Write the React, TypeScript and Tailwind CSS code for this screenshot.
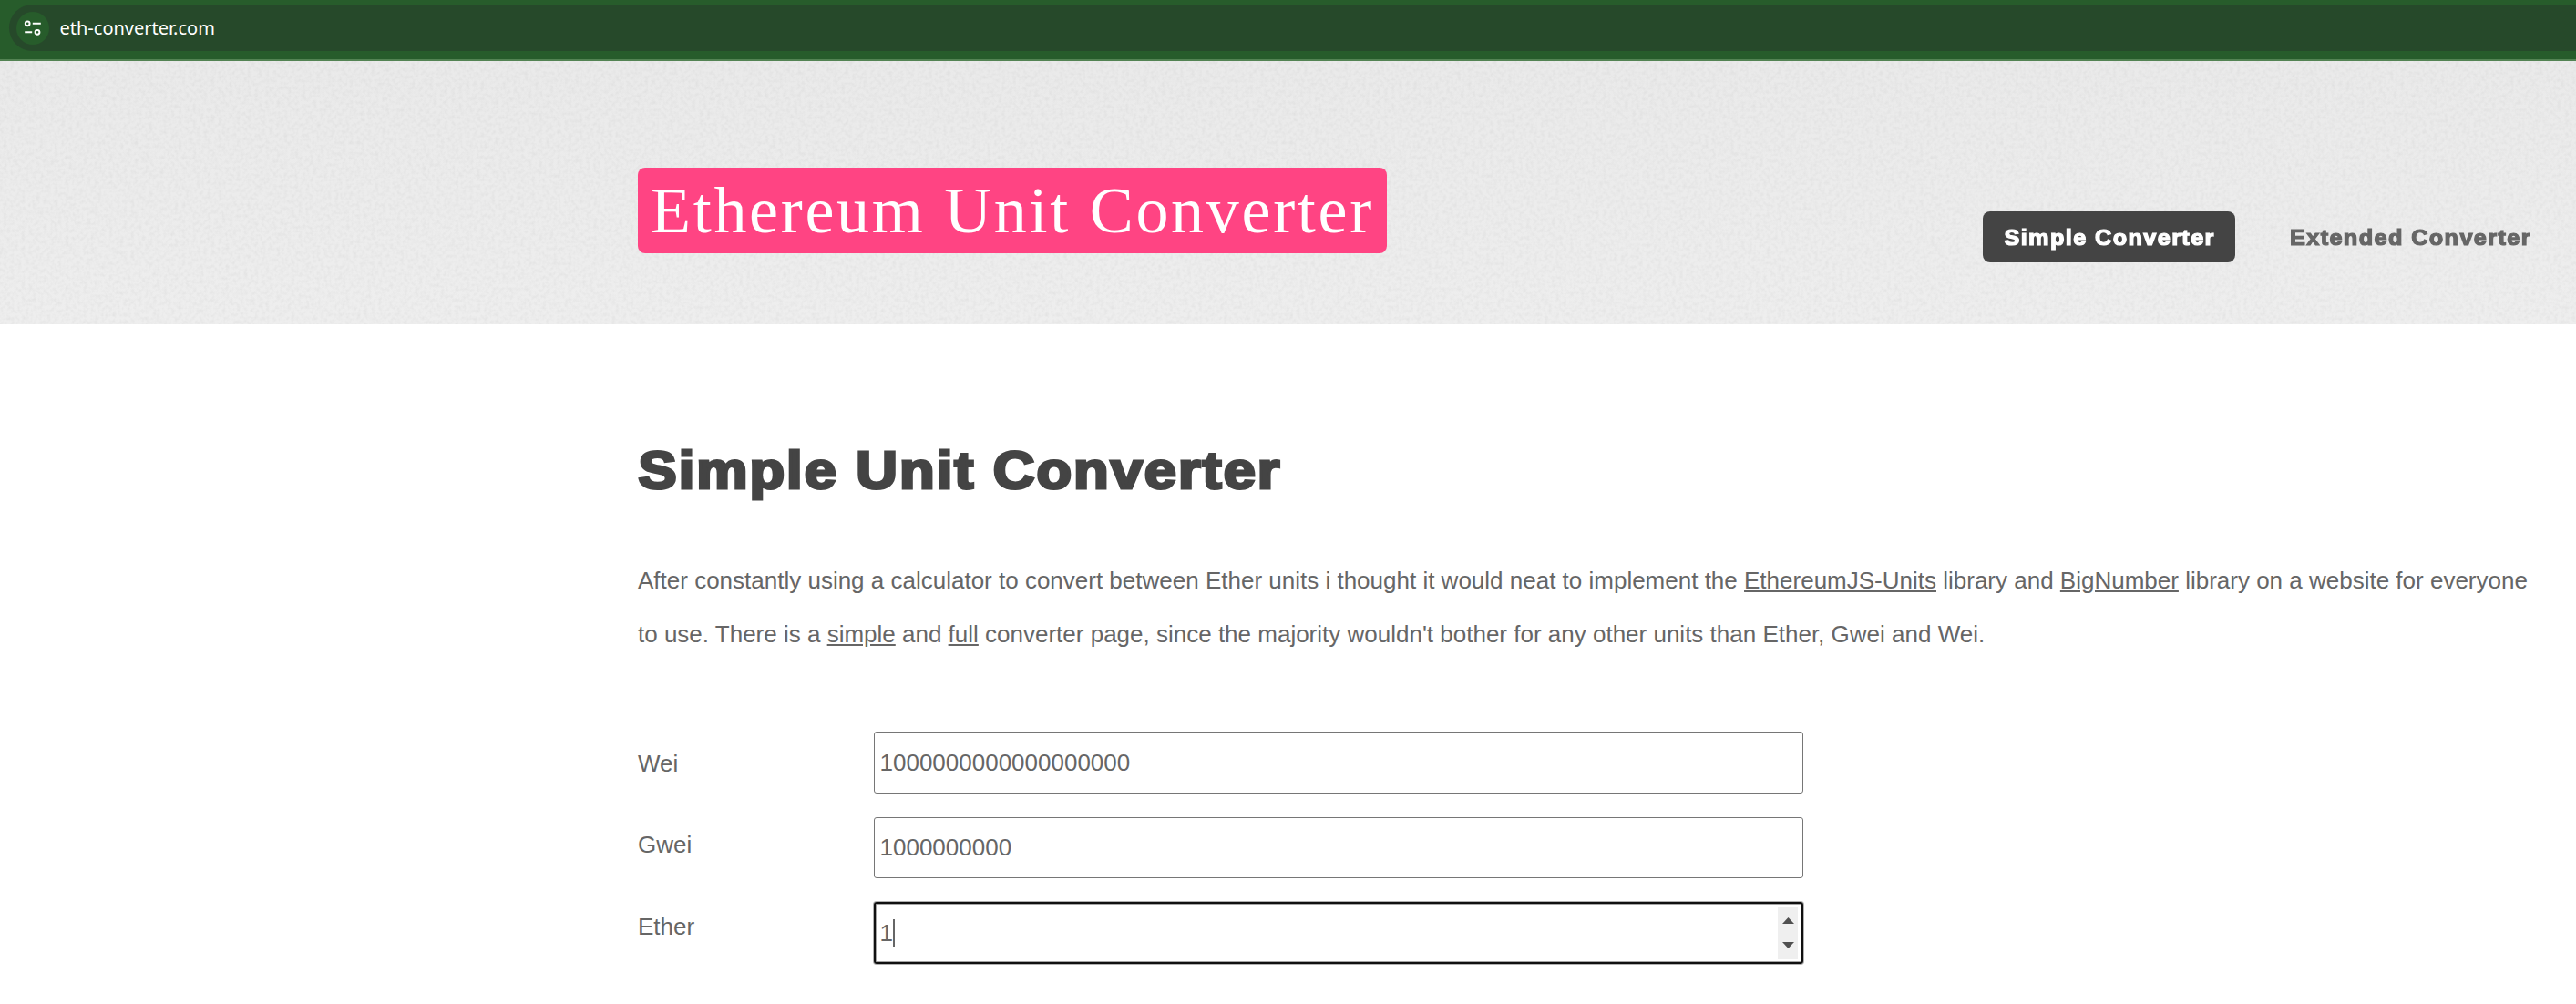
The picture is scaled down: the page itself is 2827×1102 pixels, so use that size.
function AddressBar() {
  return (
    <div className="h-[67px] bg-[#275c2b] border-b-2 border-[#538353] pt-[5px] pl-[10px]">
      <div className="flex h-[51px] items-center rounded-l-full bg-[#26492a] pl-2">
        <svg width="36" height="36" viewBox="0 0 36 36" fill="none" className="rounded-full bg-[#275c2b]">
          <g stroke="#fff" strokeWidth="2">
            <circle cx="12.2" cy="12.8" r="2.4" />
            <path d="M17.8 12.8H26.8" />
            <path d="M9.2 22.3H17.2" />
            <circle cx="23" cy="22.3" r="2.4" />
          </g>
        </svg>
        <span className="ml-[11.5px] font-['Noto_Sans',sans-serif] text-[20px] leading-7 text-white">eth-converter.com</span>
      </div>
    </div>
  );
}

/* Paper-like grain behind the site header */
function Grain() {
  return (
    <svg className="absolute inset-0 h-full w-full" aria-hidden="true">
      <filter id="grain" x="0" y="0" width="100%" height="100%" colorInterpolationFilters="sRGB">
        <feTurbulence type="fractalNoise" baseFrequency="0.25" numOctaves="2" seed="4" stitchTiles="stitch" />
        <feColorMatrix values="0 0 0 0 0  0 0 0 0 0  0 0 0 0 0  0.08 0 0 0 -0.031" />
      </filter>
      <rect width="100%" height="100%" filter="url(#grain)" />
    </svg>
  );
}

function Header() {
  return (
    <header className="relative h-[289px] bg-linear-to-b from-[#eaeaea] to-[#eeeeee]">
      <Grain />
      <div className="relative flex items-start pl-[700px] pt-[117px]">
        <div className="h-[94px] w-[822px] whitespace-nowrap rounded-[8px] bg-[#ff4483] px-[14px] font-['Liberation_Serif',serif] text-[72px] leading-[94px] tracking-[2.7px] text-white">
          Ethereum Unit Converter
        </div>
        <nav className="ml-[654px] mt-12 flex font-['Liberation_Sans',sans-serif] text-[23px] font-bold tracking-[1.24px] whitespace-nowrap">
          <a className="flex h-14 w-[277px] items-center justify-center rounded-[8px] bg-[#444444] pt-[3px] pl-[2px] text-white">
            <span className="inline-block scale-x-[1.1] [-webkit-text-stroke:1.2px_#fff]">Simple Converter</span>
          </a>
          <a className="ml-[57px] flex h-14 w-[267px] items-center justify-center pt-[3px] pl-[4px] text-[#666666]">
            <span className="inline-block scale-x-[1.1] [-webkit-text-stroke:1.2px_#666666]">Extended Converter</span>
          </a>
        </nav>
      </div>
    </header>
  );
}

function Spinner() {
  return (
    <svg width="22" height="58" viewBox="0 0 22 58" className="ml-auto mr-1 bg-[#efefef]">
      <path d="M5 19L11.5 12L18 19Z" fill="#505050" />
      <path d="M5 39L11.5 46L18 39Z" fill="#505050" />
    </svg>
  );
}

export default function App() {
  return (
    <div className="h-[1102px] w-[2827px] overflow-hidden bg-white font-['Liberation_Sans',sans-serif] text-[26px] text-[#666666]">
      <AddressBar />
      <Header />
      <main className="pl-[700px] pt-[129px]">
        <h1 className="h-[63px] w-fit origin-left scale-x-[1.1] whitespace-nowrap pl-[0.5px] text-[57.5px] leading-[63px] font-bold tracking-[1.8px] text-[#444444] [-webkit-text-stroke:3.1px_#444444]">
          Simple Unit Converter
        </h1>
        <p className="mt-[60px] whitespace-nowrap leading-[59px]">
          After constantly using a calculator to convert between Ether units i thought it would neat to implement the{" "}
          <a className="underline">EthereumJS-Units</a> library and <a className="underline">BigNumber</a> library on a website for everyone
          <br />
          to use. There is a <a className="underline">simple</a> and <a className="underline">full</a> converter page, since the majority
          wouldn't bother for any other units than Ether, Gwei and Wei.
        </p>
        <div className="mt-[67px] flex">
          <div className="w-[259px]">
            <div className="h-[90px] leading-[90px]">Wei</div>
            <div className="h-[89px] leading-[89px]">Gwei</div>
            <div className="h-[90px] leading-[90px]">Ether</div>
          </div>
          <div className="flex w-[1020px] flex-col gap-[26px] pt-[10px]">
            <div className="flex h-[68px] items-center rounded-[3px] border border-[#767676] pl-[5.5px]">1000000000000000000</div>
            <div className="flex h-[67px] items-center rounded-[3px] border border-[#767676] pl-[5.5px]">1000000000</div>
            <div className="flex h-[68px] items-center rounded-[3px] border-2 border-[#101010] pl-[4.5px] shadow-[0_0_0_1px_#b0b0b0,inset_0_0_0_1px_#a5a5a5]">
              1
              <span className="h-[30px] w-[2px] bg-[#666666]" />
              <Spinner />
            </div>
          </div>
        </div>
      </main>
    </div>
  );
}
